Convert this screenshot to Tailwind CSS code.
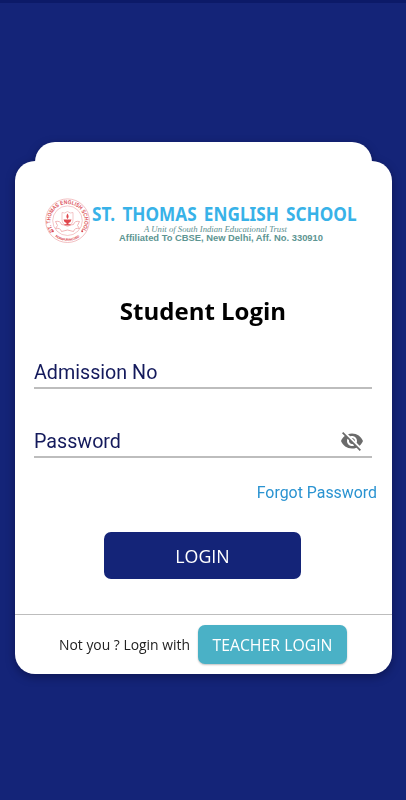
<!DOCTYPE html>
<html lang="en">
<head>
    <meta charset="UTF-8">
    <meta name="viewport" content="width=device-width, initial-scale=1.0">
    <title>St. Thomas English School - Student Login</title>
    <script src="https://cdn.jsdelivr.net/npm/@tailwindcss/browser@4"></script>
</head>
<body class="bg-[#142478] h-screen overflow-hidden border-t-3 border-[#0c1a68] font-['Open_Sans',sans-serif]">
    <div class="flex flex-col pt-[139px] drop-shadow-[0_3px_5px_rgba(0,0,30,0.4)]">
        <!-- Raised tab behind the card -->
        <div class="h-[20px] -mb-px ml-[34.5px] w-[337px] rounded-t-[20px] bg-white"></div>

        <!-- Card -->
        <main class="ml-[14.5px] w-[377px] h-[513px] flex flex-col rounded-[20px] bg-white">
            <!-- School logo -->
            <svg class="mt-[33px] ml-[27.5px] w-[320px] h-[54px] shrink-0 overflow-visible" viewBox="42 194 320 54">
                <defs>
                    <path id="ringTop" d="M54.5 232 A17 17 0 1 1 80.5 232" />
                    <path id="ringBottom" d="M54.5 236 A20 20 0 0 0 80.5 236" />
                </defs>
                <g fill="none" stroke="#eda3a6">
                    <circle cx="67.5" cy="220.7" r="21.8" stroke-width="0.7" />
                    <circle cx="67.5" cy="220.7" r="14.8" stroke-width="0.6" />
                    <path d="M62 212.5 q2.5 1.5 5.5 -1 q3 2.5 5.5 1 v7 q0 5 -5.5 7 q-5.5 -2 -5.5 -7z" stroke-width="0.6" />
                    <path d="M55.5 221.5 q5 -1 6 3 q6 2 12 0 q1 -4 6 -3 l-2 4 l2 3 q-5 -1 -6 3 q-6 -3 -12 0 q-1 -4 -6 -3 l2 -3z" stroke-width="0.8" />
                </g>
                <path d="M63.5 219.5 h8 q-.5 3 -3 3.5 v1.2 h2 v1 h-6 v-1 h2 v-1.2 q-2.5 -.5 -3 -3.5z M67.5 213.5 q2.2 3 0 5.5 q-2.2 -2.5 0 -5.5z" fill="#e0474d" />
                <circle cx="52.8" cy="231.3" r="1" fill="#d8444c" />
                <circle cx="82.2" cy="231.3" r="1" fill="#d8444c" />
                <g class="font-['Liberation_Sans',sans-serif]" fill="#dc555c" font-weight="bold">
                    <text font-size="5.6"><textPath href="#ringTop" startOffset="1" textLength="74" lengthAdjust="spacingAndGlyphs">ST. THOMAS ENGLISH SCHOOL</textPath></text>
                    <text font-size="3.2"><textPath href="#ringBottom" startOffset="1" textLength="26">INDIRAPURAM, GZBD</textPath></text>
                </g>
                <text x="92" y="220.7" font-size="19" font-weight="bold" fill="#38b2e8" word-spacing="3" textLength="264.5" lengthAdjust="spacingAndGlyphs" class="font-['Noto_Sans',sans-serif]">ST. THOMAS ENGLISH SCHOOL</text>
                <text x="144" y="231.5" font-size="8.5" font-style="italic" fill="#5c8f90" textLength="143" lengthAdjust="spacingAndGlyphs" class="font-['Liberation_Serif',serif]">A Unit of South Indian Educational Trust</text>
                <text x="119" y="240.5" font-size="8.2" font-weight="bold" fill="#5d9592" textLength="204" lengthAdjust="spacingAndGlyphs" class="font-['Liberation_Sans',sans-serif]">Affiliated To CBSE, New Delhi, Aff. No. 330910</text>
            </svg>

            <h1 class="mt-[47px] text-center text-2xl leading-[32px] font-bold text-black">Student Login</h1>

            <!-- Fields -->
            <div class="mt-[32px] ml-[19.5px] w-[338px] h-[30px] border-b-2 border-[#bdbdbd] font-[Roboto,sans-serif] text-[19.7px] leading-7 text-[#141a5c]">
                <label>Admission No</label>
            </div>
            <div class="mt-[39px] ml-[19.5px] w-[338px] h-[30px] flex items-start justify-between border-b-2 border-[#bdbdbd] font-[Roboto,sans-serif] text-[19.7px] leading-7 text-[#141a5c]">
                <label>Password</label>
                <svg class="mt-px mr-2 w-6 h-6 text-[#6b6b6b]" viewBox="0 0 24 24" fill="currentColor">
                    <path d="M12 7c2.76 0 5 2.24 5 5 0 .65-.13 1.26-.36 1.83l2.92 2.92c1.51-1.26 2.7-2.89 3.43-4.75-1.73-4.39-6-7.5-11-7.5-1.4 0-2.74.25-3.98.7l2.16 2.16C10.74 7.13 11.35 7 12 7zM2 4.27l2.28 2.28.46.46C3.08 8.3 1.78 10.02 1 12c1.73 4.39 6 7.5 11 7.5 1.55 0 3.03-.3 4.38-.84l.42.42L19.73 22 21 20.73 3.27 3 2 4.27zM7.53 9.8l1.55 1.55c-.05.21-.08.43-.08.65 0 1.66 1.34 3 3 3 .22 0 .44-.03.65-.08l1.55 1.55c-.67.33-1.41.53-2.2.53-2.76 0-5-2.24-5-5 0-.79.2-1.53.53-2.2zm4.31-.78l3.15 3.15.02-.16c0-1.66-1.34-3-3-3l-.17.01z" />
                </svg>
            </div>

            <a href="#" class="mt-[23px] mr-[14.5px] self-end font-[Roboto,sans-serif] text-[15.9px] leading-6 text-[#2a93d1]">Forgot Password</a>

            <button class="mt-[27px] ml-[89.5px] w-[197px] h-[47px] shrink-0 rounded-[7px] bg-[#142478] pt-0.5 text-[17.8px] text-white">LOGIN</button>

            <!-- Switch to teacher login -->
            <div class="mt-auto h-[60px] flex items-center justify-center gap-2 border-t border-[#bdbdbd]">
                <span class="pt-0.5 text-[13.9px] text-[#222]">Not you ? Login with</span>
                <button class="w-[149px] h-[39px] rounded-[7px] bg-[#4ab1c6] pt-0.5 text-[15.8px] text-white shadow-[0_1px_2px_rgba(0,0,0,0.25)]">TEACHER LOGIN</button>
            </div>
        </main>
    </div>
</body>
</html>
